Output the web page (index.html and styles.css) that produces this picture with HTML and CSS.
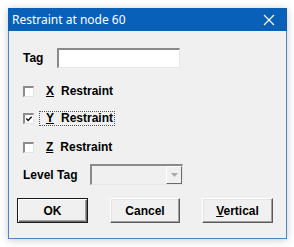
FILE: index.html
```html
<!DOCTYPE html>
<html>
<head>
<meta charset="utf-8">
<link rel="stylesheet" href="styles.css">
</head>
<body>
<div class="window">
  <div class="titlebar">
    <span class="title">Restraint at node 60</span>
    <svg class="close" width="12" height="12" viewBox="0 0 12 12"><path d="M1 1L11 11M11 1L1 11" stroke="#fff" stroke-width="1.2" fill="none"/></svg>
  </div>
  <div class="body">
    <div class="row tag-row">
      <span class="lbl tag-lbl">Tag</span>
      <div class="textbox"></div>
    </div>
    <div class="row check-row r-x">
      <span class="check"></span>
      <span class="cb-label"><u class="key">X</u>Restraint</span>
    </div>
    <div class="row check-row r-y">
      <span class="check checked"><svg width="9" height="9" viewBox="0 0 9 9"><path d="M1.5 3.5L3.5 5.5L7.5 1.5" stroke="#111" stroke-width="1.6" fill="none"/></svg></span>
      <span class="cb-label focus"><u class="key">Y</u>Restraint</span>
    </div>
    <div class="row check-row r-z">
      <span class="check"></span>
      <span class="cb-label"><u class="key">Z</u>Restraint</span>
    </div>
    <div class="row level-row">
      <span class="lbl level-lbl">Level Tag</span>
      <div class="combo">
        <div class="combo-btn"><svg width="7" height="4" viewBox="0 0 7 4"><path d="M0 0H7L3.5 4Z" fill="#a8a8a8"/></svg></div>
      </div>
    </div>
    <div class="row btn-row">
      <div class="btn default"><span>OK</span></div>
      <div class="btn"><span>Cancel</span></div>
      <div class="btn"><span><u>V</u>ertical</span></div>
    </div>
  </div>
</div>
</body>
</html>
```

FILE: styles.css
```css
html, body {
  margin: 0;
  padding: 0;
  background: #ffffff;
}
body {
  width: 294px;
  height: 247px;
  overflow: hidden;
}
.window {
  margin: 8px 0 0 8px;
  width: 279px;
  height: 231px;
  box-sizing: border-box;
  border: 1px solid #4a86c8;
  border-top: none;
  background: #f0f0f0;
  box-shadow: 0 1px 8px rgba(0, 0, 0, 0.22);
  display: flex;
  flex-direction: column;
}
.titlebar {
  height: 23px;
  margin: 0 -1px;
  background: #0860b8;
  display: flex;
  align-items: center;
  justify-content: space-between;
  padding: 0 12px 0 4px;
  flex-shrink: 0;
}
.title {
  font-family: "Noto Sans", "Open Sans", sans-serif;
  font-size: 12px;
  color: #ffffff;
  line-height: 14px;
}
.close {
  display: block;
}
.body {
  display: flex;
  flex-direction: column;
  padding-left: 14px;
  font-family: "Liberation Sans", Arial, sans-serif;
  font-weight: bold;
  font-size: 12px;
  color: #000;
}
.row {
  display: flex;
  align-items: center;
}
.tag-row {
  margin-top: 17px;
  height: 20px;
}
.lbl {
  line-height: 14px;
}
.tag-lbl {
  width: 34px;
}
.textbox {
  width: 123px;
  height: 20px;
  box-sizing: border-box;
  background: #fff;
  border-top: 2px solid #8a8a8a;
  border-left: 2px solid #8a8a8a;
  border-right: 1px solid #e6e6e6;
  border-bottom: 1px solid #e6e6e6;
}
.check-row {
  height: 16px;
}
.r-x { margin-top: 15px; }
.r-y { margin-top: 11px; }
.r-z { margin-top: 13px; }
.check {
  width: 11px;
  height: 11px;
  box-sizing: border-box;
  background: #fff;
  border-top: 2px solid #8c8c8c;
  border-left: 2px solid #8c8c8c;
  border-right: 1px solid #e4e4e4;
  border-bottom: 1px solid #e4e4e4;
  display: flex;
  align-items: center;
  justify-content: center;
  margin-top: 1px;
}
.check svg {
  display: block;
}
.cb-label {
  margin-left: 5px;
  padding: 0 1px 0 6px;
  border: 1px dotted transparent;
  line-height: 13px;
}
.key {
  display: inline-block;
  margin-right: 7px;
}
.cb-label.focus {
  border-color: #555;
}
.level-row {
  margin-top: 9px;
  height: 21px;
}
.level-lbl {
  width: 67px;
}
.combo {
  width: 93px;
  height: 21px;
  box-sizing: border-box;
  background: #f0f0f0;
  border-top: 2px solid #8a8a8a;
  border-left: 2px solid #8a8a8a;
  border-right: 1px solid #e6e6e6;
  border-bottom: 1px solid #e6e6e6;
  display: flex;
  justify-content: flex-end;
}
.combo-btn {
  width: 16px;
  height: 18px;
  box-sizing: border-box;
  background: #f0f0f0;
  border-top: 1px solid #fff;
  border-left: 1px solid #fff;
  border-right: 1px solid #6b6b6b;
  border-bottom: 1px solid #6b6b6b;
  display: flex;
  align-items: center;
  justify-content: center;
}
.combo-btn svg { display: block; }
.btn-row {
  margin-top: 13px;
  margin-left: -6px;
  height: 25px;
  gap: 22px;
}
.btn {
  width: 71px;
  height: 25px;
  box-sizing: border-box;
  background: #f0f0f0;
  border-top: 1px solid #fff;
  border-left: 1px solid #fff;
  border-right: 1px solid #5a5a5a;
  border-bottom: 1px solid #5a5a5a;
  box-shadow: inset -1px -1px 0 #a0a0a0, inset 1px 1px 0 #e3e3e3;
  display: flex;
  align-items: center;
  justify-content: center;
}
.btn:nth-child(2) { width: 70px; }
.btn.default {
  border: 1px solid #1a1a1a;
  box-shadow: inset 1px 1px 0 #fff, inset -1px -1px 0 #6a6a6a, inset -2px -2px 0 #a0a0a0;
}
.btn span {
  line-height: 14px;
}
```
